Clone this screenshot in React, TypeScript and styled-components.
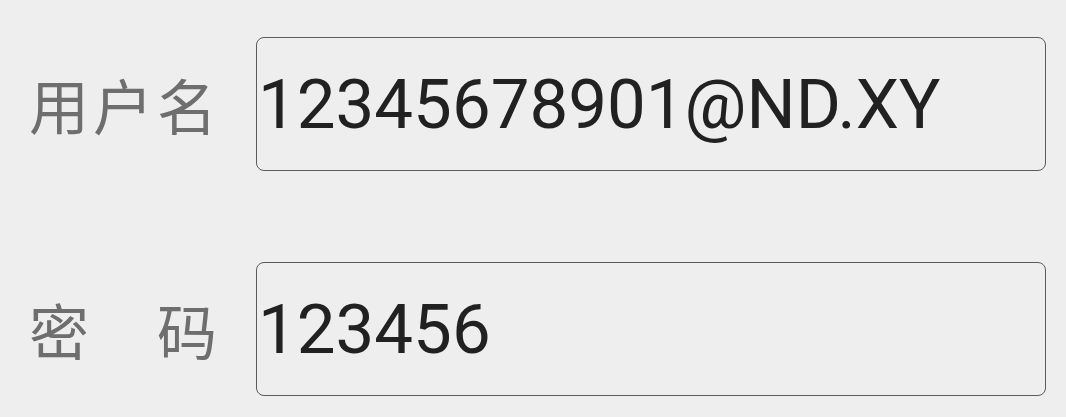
import React from "react";
import styled, { createGlobalStyle } from "styled-components";

const Global = createGlobalStyle`
  html, body { margin: 0; padding: 0; background: #eeeeee; }
  body { font-family: Roboto, "Noto Sans CJK SC", sans-serif; }
`;

const Form = styled.div`
  display: flex;
  flex-direction: column;
  gap: 91px;
  padding: 37px 20px 0 29px;
  width: 1066px;
  box-sizing: border-box;
`;

const Row = styled.div`
  display: flex;
  align-items: center;
`;

const Label = styled.div`
  width: 227px;
  flex: none;
  font-family: "Noto Sans CJK SC", sans-serif;
  font-size: 60px;
  letter-spacing: 4px;
  color: #6e6e6e;
  white-space: pre;
  line-height: 1;
`;

const Field = styled.div`
  flex: 1;
  height: 134px;
  box-sizing: border-box;
  border: 1px solid #5a5a5a;
  border-radius: 8px;
  display: flex;
  align-items: center;
  padding-left: 1px;
  font-family: Roboto, sans-serif;
  font-size: 69px;
  color: #212121;
  line-height: 1;
`;

export default function App() {
  return (
    <>
      <Global />
      <Form>
        <Row>
          <Label>用户名</Label>
          <Field>12345678901@ND.XY</Field>
        </Row>
        <Row>
          <Label>密　码</Label>
          <Field>123456</Field>
        </Row>
      </Form>
    </>
  );
}
